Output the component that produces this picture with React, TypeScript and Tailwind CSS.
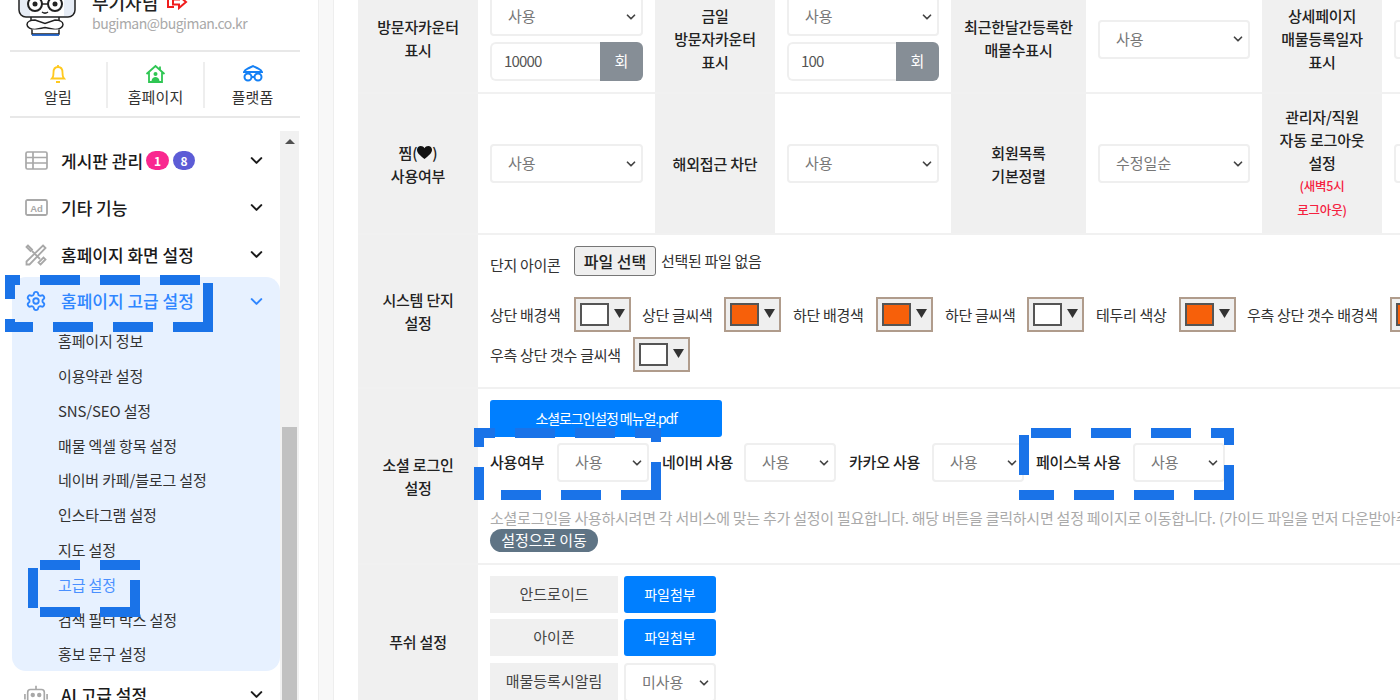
import React from "react";
import { ChevronDown, Settings } from "lucide-react";

const FONT = "[font-family:'Noto_Sans_CJK_KR','Noto_Sans',sans-serif]";

function Sel({ v = "사용", w = "w-[153px]", pl = "pl-[16px]" }: { v?: string; w?: string; pl?: string }) {
  return (
    <div className={`${w} ${pl} h-[39px] shrink-0 bg-white border-2 border-[#efefef] rounded-[4px] flex items-center justify-between pr-[3px] text-[15px] font-normal tracking-normal text-[#777]`}>
      <span>{v}</span>
      <ChevronDown size={14} strokeWidth={3} className="text-[#444]" />
    </div>
  );
}

function Counter({ v }: { v: string }) {
  return (
    <div className="w-full h-[39px] flex">
      <div className="flex-1 border-2 border-r-0 border-[#efefef] rounded-l-[6px] pl-[12px] flex items-center text-[15px] text-[#555] tracking-[-0.8px]">{v}</div>
      <div className="w-[43px] bg-[#868e96] rounded-r-[6px] text-white flex items-center justify-center text-[15px]">회</div>
    </div>
  );
}

function Label({ children, w, extra = "" }: { children: React.ReactNode; w: string; extra?: string }) {
  return (
    <div className={`${w} ${extra} shrink-0 bg-[#f0f0f0] flex flex-col items-center justify-center text-center text-[15px] leading-[23px] font-medium text-[#222] tracking-[-0.2px]`}>
      {children}
    </div>
  );
}

function ColorBox({ c }: { c: string }) {
  return (
    <div className="w-[57px] h-[35px] shrink-0 border-2 border-[#b09c8c] bg-[#efefef] flex items-center pl-[4px] gap-[5px]">
      <div className="w-[29px] h-[23px] border-2 border-[#555]" style={{ backgroundColor: c }} />
      <svg width="11" height="9" viewBox="0 0 11 9" className="mb-[3px]"><path d="M0 0h11L5.500 9z" fill="#333" /></svg>
    </div>
  );
}

function Menu({ icon, label, badges, h = "h-[47px]", active }: { icon: React.ReactNode; label: string; badges?: boolean; h?: string; active?: boolean }) {
  return (
    <div className={`${h} flex items-center pl-[24px] pr-[14px] ${active ? "text-[#2f86ff]" : "text-[#1a1a1a]"}`}>
      <div className="w-[24px] flex justify-center shrink-0">{icon}</div>
      <span className="ml-[13px] text-[17px] font-medium tracking-[0px] whitespace-nowrap">{label}</span>
      {badges && (
        <span className="flex ml-[3px] gap-[4px]">
          <span className="w-[23px] h-[19px] rounded-full bg-[#f9288f] text-white text-[12px] font-bold flex items-center justify-center">1</span>
          <span className="w-[22px] h-[19px] rounded-full bg-[#5c5cd6] text-white text-[12px] font-bold flex items-center justify-center">8</span>
        </span>
      )}
      <ChevronDown size={19} strokeWidth={2.6} className="ml-auto" />
    </div>
  );
}

const subs = ["홈페이지 정보", "이용약관 설정", "SNS/SEO 설정", "매물 엑셀 항목 설정", "네이버 카페/블로그 설정", "인스타그램 설정", "지도 설정", "고급 설정", "검색 필터 박스 설정", "홍보 문구 설정"];

const marks: [number, number, number, number][] = [
  // sidebar title
  [5, 275, 15, 10], [40, 275, 40, 10], [100, 275, 40, 10], [160, 275, 40, 10],
  [5, 275, 10, 24], [5, 319, 10, 13], [203, 283, 10, 49],
  [5, 322, 28, 10], [53, 322, 40, 10], [113, 322, 40, 10], [173, 322, 40, 10],
  // sub item
  [40, 560, 40, 10], [100, 560, 40, 10], [130, 580, 10, 37], [28, 568, 10, 40], [40, 607, 40, 10], [100, 607, 40, 10],
  // use
  [474, 428, 21, 10], [515, 428, 40, 10], [575, 428, 40, 10], [635, 428, 26, 10],
  [474, 428, 10, 19], [474, 467, 10, 33], [651, 428, 10, 14], [651, 462, 10, 38],
  [474, 490, 10, 10], [501, 490, 40, 10], [561, 490, 40, 10], [621, 490, 40, 10],
  // facebook
  [1031, 428, 40, 10], [1091, 428, 40, 10], [1151, 428, 40, 10], [1211, 428, 23, 10],
  [1224, 428, 10, 17], [1224, 465, 10, 35], [1019, 435, 10, 40],
  [1019, 490, 35, 10], [1074, 490, 40, 10], [1134, 490, 40, 10], [1194, 490, 40, 10],
];

function Avatar() {
  return (
    <svg width="60" height="36" viewBox="0 0 60 36" className="block">
      <path d="M27 31h23v3H27z" fill="#fff" />
      <rect x="1" y="-22" width="56" height="39" rx="7" fill="#e6ecf5" stroke="#222" strokeWidth="1.500" />
      <rect x="12" y="-20" width="34" height="36" fill="#fff" />
      <circle cx="17" cy="4" r="7" fill="#fff" stroke="#222" strokeWidth="2" />
      <circle cx="37" cy="4" r="7" fill="#fff" stroke="#222" strokeWidth="2" />
      <circle cx="17" cy="4" r="2.500" fill="#222" />
      <circle cx="37" cy="4" r="2.500" fill="#222" />
      <path d="M24 4h6M24 12c2 1.500 4 1.500 6 0" fill="none" stroke="#222" strokeWidth="1.500" />
      <path d="M13 17v4M41 17v4" stroke="#222" strokeWidth="1.500" />
      <path d="M9 24.500c0-3 4-4.500 8-4.500l10 3.500 10-3.500c4 0 8 1.500 8 4.500 0 3-4 5-8 5l-10-2-10 2c-4 0-8-2-8-5z" fill="#fff" stroke="#222" strokeWidth="1.500" />
      <path d="M14 29.500V34h27v-4.500" fill="#fff" stroke="#222" strokeWidth="1.500" />
      <path d="M14 35h27" stroke="#1d5fc4" strokeWidth="1.800" />
    </svg>
  );
}

function Sidebar() {
  return (
    <aside className="w-[318px] h-[700px] shrink-0 flex flex-col overflow-hidden">
      <div className="mx-[10px] w-[290px] h-[52px] shrink-0 border-b-2 border-[#e8e8e8] flex pl-[8px]">
        <Avatar />
        <div className="ml-[14px] -mt-[9px]">
          <div className="flex items-center h-[22px] text-[18px] font-medium text-[#222]">
            부기자님
            <svg width="22" height="16" viewBox="0 0 22 16" className="ml-[8px]" fill="none" stroke="#f01d1d" strokeWidth="2"><path d="M9 1H2v12h6M7 5.500h6V2l7 6-7 6v-3.500H7z" /></svg>
          </div>
          <div className="text-[14px] leading-[20px] text-[#a9a9a9] tracking-[-0.5px]">bugiman@bugiman.co.kr</div>
        </div>
      </div>
      <div className="mx-[10px] w-[290px] h-[66px] shrink-0 border-b-2 border-[#e8e8e8] flex items-start pt-[10px] text-[15px] text-[#333] tracking-[0.1px]">
        <div className="w-[98px] h-[46px] flex flex-col items-center border-r-2 border-[#eee]">
          <svg width="16" height="21" viewBox="0 0 16 21" className="mt-[2px] mb-[1px]" fill="none" stroke="#ffc91f" strokeWidth="1.800"><path d="M2 14.500c1.500-1.500 1.500-3 1.500-6C3.500 5 5.500 3 8 3s4.500 2 4.500 5.500c0 3 0 4.500 1.500 6zM6 18h4M8 1v2" /></svg>
          <span className="leading-[22px]">알림</span>
        </div>
        <div className="w-[97px] h-[46px] flex flex-col items-center border-r-2 border-[#eee]">
          <svg width="21" height="21" viewBox="0 0 21 21" className="mt-[2px] mb-[1px]" fill="none" stroke="#2fc653" strokeWidth="1.800"><path d="M1.500 10 10.500 2l9 8M4 8v10h13V8M15 2.500v3" /><circle cx="10.500" cy="10" r="2" fill="#2fc653" stroke="none" /><path d="M6.500 17c.5-3 2-4 4-4s3.500 1 4 4z" fill="#2fc653" stroke="none" /></svg>
          <span className="leading-[22px]">홈페이지</span>
        </div>
        <div className="w-[95px] h-[46px] flex flex-col items-center">
          <svg width="20" height="21" viewBox="0 0 20 21" className="mt-[1px] mb-[2px]" fill="none" stroke="#1480f5" strokeWidth="2"><circle cx="5" cy="14" r="3.500" /><circle cx="15" cy="14" r="3.500" /><path d="M8.500 14h3" /><path d="M1 9c1-3 3-3 5-4l4-2 4 2c2 1 4 1 5 4z" /></svg>
          <span className="leading-[22px]">플랫폼</span>
        </div>
      </div>
      <div className="flex mt-[13px] h-[569px] overflow-hidden">
        <div className="w-[280px] shrink-0 pl-[12px] pt-[6px]">
          <div className="-ml-[12px] w-[280px]">
            <Menu badges label="게시판 관리" icon={<svg width="23" height="19" viewBox="0 0 23 19" fill="none" stroke="#a8a8a8" strokeWidth="1.700"><rect x="1" y="1" width="21" height="17" rx="1.500" /><path d="M1 6.500h21M1 12h21M8 1v17" /></svg>} />
            <Menu label="기타 기능" icon={<svg width="23" height="17" viewBox="0 0 23 17"><rect x="1" y="1" width="21" height="15" rx="1.500" fill="none" stroke="#a8a8a8" strokeWidth="1.800" /><text x="11.500" y="12.500" textAnchor="middle" fontSize="9.500" fontWeight="700" fill="#a8a8a8" fontFamily="'Liberation Sans',sans-serif">Ad</text></svg>} />
            <Menu label="홈페이지 화면 설정" icon={<svg width="22" height="22" viewBox="0 0 22 22" fill="none" stroke="#a8a8a8" strokeWidth="1.800"><path d="M3 1.500 1.500 3l4 4 1.500-1.500zM7 7l8 8M15.500 20.500l5-5-2-2-5 5zM18 1.500l2.500 2.500L4.500 20.500H1.500V17.500z" /></svg>} />
          </div>
          <div className="-mt-[1px] w-[268px] h-[394px] bg-[#e7f1ff] rounded-[14px] text-[15px]">
            <div className="-ml-[12px]">
              <Menu active h="h-[48px]" label="홈페이지 고급 설정" icon={<Settings size={22} strokeWidth={2} className="text-[#2f86ff]" />} />
            </div>
            <div className="pl-[46px] -mt-[1px]">
              {subs.map((s, i) => (
                <div key={s} className={`h-[34.800px] flex items-center tracking-[-0.15px] ${i === 7 ? "text-[#4a90ff]" : "text-[#333]"}`}>{s}</div>
              ))}
            </div>
          </div>
          <div className="-ml-[12px]">
            <Menu label="AI 고급 설정" icon={<svg width="26" height="24" viewBox="0 0 26 24" fill="none" stroke="#a8a8a8" strokeWidth="1.800"><rect x="4" y="6" width="18" height="15" rx="3" /><path d="M13 2v4M1 11v6M25 11v6" /><circle cx="9.500" cy="12" r="1.500" fill="#a8a8a8" /><circle cx="16.500" cy="12" r="1.500" fill="#a8a8a8" /></svg>} />
          </div>
        </div>
        <div className="w-[19px] h-full bg-[#f1f1f1] flex flex-col items-center">
          <svg width="10" height="5" viewBox="0 0 10 5" className="mt-[8px]"><path d="M0 5 5 0l5 5z" fill="#505050" /></svg>
          <div className="mt-[283px] w-[15px] flex-1 bg-[#c1c1c1]" />
        </div>
      </div>
    </aside>
  );
}

function Main() {
  return (
    <main className="flex-1 min-w-0 pl-[24px] overflow-hidden">
      <div className="w-[1100px]">
        {/* row 1 */}
        <div className="h-[108px] -mt-[14px] flex border-b-2 border-[#f1f1f1]">
          <Label w="w-[120px]" extra="pb-[2px]"><span>방문자카운터</span><span>표시</span></Label>
          <div className="w-[177px] shrink-0 pl-[12px] pr-[12px] flex flex-col justify-center gap-[6px]">
            <Sel /><Counter v="10000" />
          </div>
          <Label w="w-[120px]" extra="pb-[2px]"><span>금일</span><span>방문자카운터</span><span>표시</span></Label>
          <div className="w-[176px] shrink-0 pl-[12px] pr-[12px] flex flex-col justify-center gap-[6px]">
            <Sel w="w-[152px]" /><Counter v="100" />
          </div>
          <Label w="w-[135px]" extra="pb-[2px]"><span>최근한달간등록한</span><span>매물수표시</span></Label>
          <div className="w-[176px] shrink-0 pl-[12px] flex items-center"><Sel w="w-[152px]" /></div>
          <Label w="w-[120px]" extra="pb-[2px]"><span>상세페이지</span><span>매물등록일자</span><span>표시</span></Label>
          <div className="pl-[12px] flex items-center"><Sel /></div>
        </div>
        {/* row 2 */}
        <div className="h-[141px] flex border-b-2 border-[#f1f1f1]">
          <Label w="w-[120px]">
            <span className="flex items-center">찜(<svg width="15" height="13" viewBox="0 0 15 13"><path d="M7.500 13C3 9.500 0 7 0 3.800 0 1.500 1.800 0 3.800 0c1.500 0 3 .8 3.700 2.200C8.200.8 9.700 0 11.200 0 13.200 0 15 1.500 15 3.800 15 7 12 9.500 7.500 13z" fill="#111" /></svg>)</span>
            <span>사용여부</span>
          </Label>
          <div className="w-[177px] shrink-0 pl-[12px] flex items-center"><Sel /></div>
          <Label w="w-[120px]"><span>해외접근 차단</span></Label>
          <div className="w-[176px] shrink-0 pl-[12px] flex items-center"><Sel w="w-[152px]" /></div>
          <Label w="w-[135px]"><span>회원목록</span><span>기본정렬</span></Label>
          <div className="w-[176px] shrink-0 pl-[12px] flex items-center"><Sel w="w-[152px]" v="수정일순" /></div>
          <Label w="w-[120px]"><span>관리자/직원</span><span>자동 로그아웃</span><span>설정</span><span className="text-[#f5213f] text-[12.500px] leading-[24px]">(새벽5시</span><span className="text-[#f5213f] text-[12.500px] leading-[24px]">로그아웃)</span></Label>
          <div className="pl-[12px] flex items-center"><Sel /></div>
        </div>
        {/* row 3 */}
        <div className="h-[154px] flex border-b-2 border-[#f1f1f1]">
          <Label w="w-[120px]"><span>시스템 단지</span><span>설정</span></Label>
          <div className="pl-[12px] flex-1 text-[15px] text-[#333] tracking-[-0.3px]">
            <div className="flex items-center mt-[11px] h-[30px]">
              <span className="w-[84px] pt-[8px]">단지 아이콘</span>
              <div className="w-[82px] h-[30px] border border-[#767676] bg-[#efefef] rounded-[3px] flex items-center justify-center text-[16px] font-medium text-[#222] tracking-[0px]">파일 선택</div>
              <span className="ml-[5px]">선택된 파일 없음</span>
            </div>
            <div className="flex items-center mt-[21px] h-[35px] whitespace-nowrap">
              <span className="w-[84px] pt-[2px]">상단 배경색</span><ColorBox c="#fff" />
              <span className="w-[82px] ml-[11px] pt-[2px]">상단 글씨색</span><ColorBox c="#f7600a" />
              <span className="w-[83px] ml-[12px] pt-[2px]">하단 배경색</span><ColorBox c="#f7600a" />
              <span className="w-[82px] ml-[12px] pt-[2px]">하단 글씨색</span><ColorBox c="#fff" />
              <span className="w-[83px] ml-[12px] pt-[2px]">테두리 색상</span><ColorBox c="#f7600a" />
              <span className="w-[143px] ml-[11px] pt-[2px]">우측 상단 갯수 배경색</span><ColorBox c="#f7600a" />
            </div>
            <div className="flex items-center mt-[5px] h-[35px]">
              <span className="w-[143px] pt-[2px]">우측 상단 갯수 글씨색</span><ColorBox c="#fff" />
            </div>
          </div>
        </div>
        {/* row 4 */}
        <div className="h-[176px] flex border-b-2 border-[#f1f1f1]">
          <Label w="w-[120px]"><span>소셜 로그인</span><span>설정</span></Label>
          <div className="pl-[12px] flex-1 text-[15px] whitespace-nowrap">
            <div className="w-[232px] h-[37px] mt-[11px] bg-[#007fff] rounded-[3px] text-white text-[14px] tracking-[-1.100px] flex items-center justify-center">소셜로그인설정 메뉴얼.pdf</div>
            <div className="flex items-center mt-[6px] h-[39px] font-medium text-[#222] tracking-[-0.2px]">
              <span className="w-[67px]">사용여부</span><Sel w="w-[92px]" />
              <span className="w-[82px] ml-[13px]">네이버 사용</span><Sel w="w-[92px]" />
              <span className="w-[83px] ml-[13px]">카카오 사용</span><Sel w="w-[92px]" />
              <span className="w-[97px] ml-[12px]">페이스북 사용</span><Sel w="w-[92px]" />
            </div>
            <div className="mt-[26px] text-[15px] leading-[20px] text-[#aaa] tracking-[-0.25px]">소셜로그인을 사용하시려면 각 서비스에 맞는 추가 설정이 필요합니다. 해당 버튼을 클릭하시면 설정 페이지로 이동합니다. (가이드 파일을 먼저 다운받아주세요)</div>
            <div className="w-[108px] h-[23px] mt-[1px] rounded-full bg-[#5f7485] text-white flex items-center justify-center tracking-[-0.1px]">설정으로 이동</div>
          </div>
        </div>
        {/* row 5 */}
        <div className="h-[154px] flex">
          <Label w="w-[120px]" extra="pb-[2px]"><span>푸쉬 설정</span></Label>
          <div className="pl-[12px] pt-[11px] text-[15px] flex flex-col gap-[6px]">
            <div className="flex gap-[6px]">
              <div className="w-[128px] h-[37px] bg-[#f0f0f0] text-[#444] flex items-center justify-center">안드로이드</div>
              <div className="w-[92px] h-[37px] bg-[#007fff] text-white rounded-[3px] flex items-center justify-center text-[14px]">파일첨부</div>
            </div>
            <div className="flex gap-[6px]">
              <div className="w-[128px] h-[37px] bg-[#f0f0f0] text-[#444] flex items-center justify-center">아이폰</div>
              <div className="w-[92px] h-[37px] bg-[#007fff] text-white rounded-[3px] flex items-center justify-center text-[14px]">파일첨부</div>
            </div>
            <div className="flex gap-[6px] mt-[1px]">
              <div className="w-[128px] h-[37px] bg-[#f0f0f0] text-[#444] flex items-center justify-center">매물등록시알림</div>
              <Sel w="w-[92px]" v="미사용" />
            </div>
          </div>
        </div>
      </div>
    </main>
  );
}

export default function App() {
  return (
    <div className={`relative w-[1400px] h-[700px] overflow-hidden bg-white flex ${FONT}`}>
      <Sidebar />
      <div className="w-[16px] h-full shrink-0 bg-[#f8f8f8] border-x border-[#eeeeee]" />
      <Main />
      {marks.map(([x, y, w, h], i) => (
        <div key={i} className="absolute bg-[#1a73e8]" style={{ left: x, top: y, width: w, height: h }} />
      ))}
    </div>
  );
}
